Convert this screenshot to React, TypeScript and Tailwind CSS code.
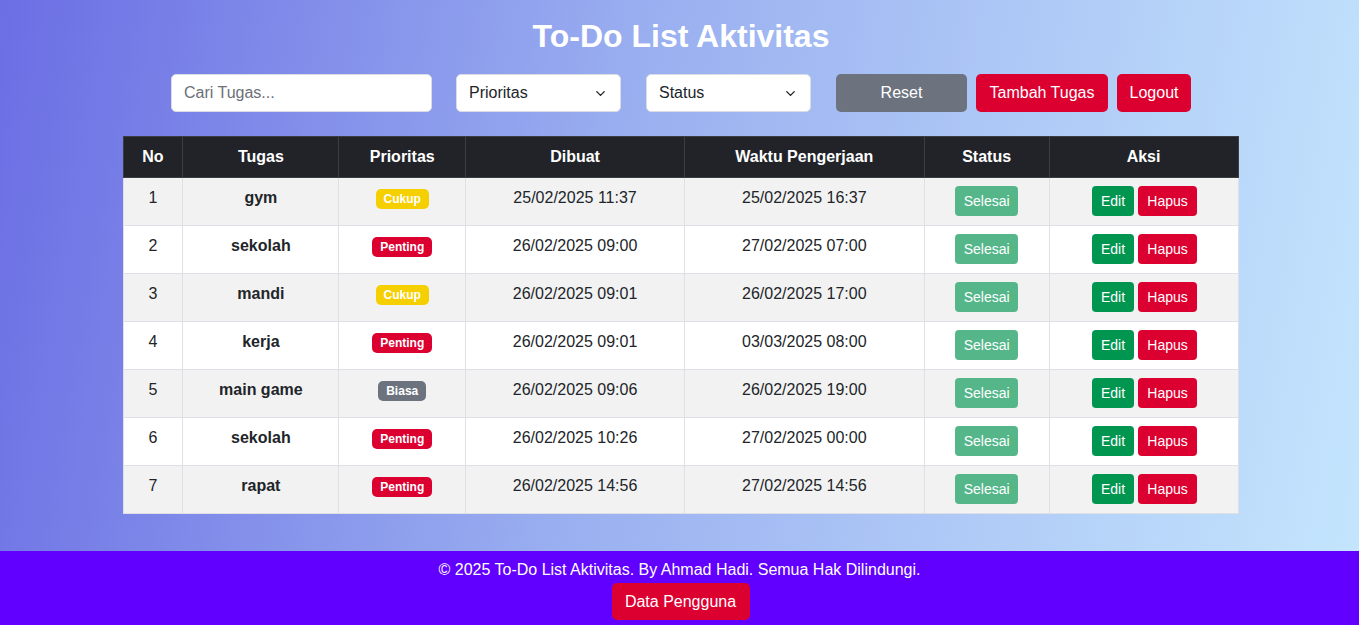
import React from "react";

type Row = { no: number; task: string; prio: "Cukup" | "Penting" | "Biasa"; created: string; due: string };

const rows: Row[] = [
  { no: 1, task: "gym", prio: "Cukup", created: "25/02/2025 11:37", due: "25/02/2025 16:37" },
  { no: 2, task: "sekolah", prio: "Penting", created: "26/02/2025 09:00", due: "27/02/2025 07:00" },
  { no: 3, task: "mandi", prio: "Cukup", created: "26/02/2025 09:01", due: "26/02/2025 17:00" },
  { no: 4, task: "kerja", prio: "Penting", created: "26/02/2025 09:01", due: "03/03/2025 08:00" },
  { no: 5, task: "main game", prio: "Biasa", created: "26/02/2025 09:06", due: "26/02/2025 19:00" },
  { no: 6, task: "sekolah", prio: "Penting", created: "26/02/2025 10:26", due: "27/02/2025 00:00" },
  { no: 7, task: "rapat", prio: "Penting", created: "26/02/2025 14:56", due: "27/02/2025 14:56" },
];

function Badge({ p }: { p: Row["prio"] }) {
  const cls =
    p === "Cukup"
      ? "bg-[#f5cf00]"
      : p === "Penting"
      ? "bg-[#dc0030]"
      : "bg-[#6c737f]";
  return (
    <span className={`inline-block align-top ${cls} text-white text-[12px] font-bold leading-[14px] px-[8px] py-[3px] rounded-[5px]`}>
      {p}
    </span>
  );
}

function Chevron() {
  return (
    <svg width="15" height="15" viewBox="0 0 24 24" fill="none" stroke="#222" strokeWidth="2.2" strokeLinecap="round" strokeLinejoin="round">
      <path d="M6 9l6 6 6-6" />
    </svg>
  );
}

function FakeSelect({ label }: { label: string }) {
  return (
    <div className="relative w-[165px] h-[38px]">
      <select className="appearance-none w-full h-full bg-white border border-[#d9dce3] rounded-[5px] pl-[12px] pr-[30px] text-[16px] text-[#212529] outline-none">
        <option>{label}</option>
      </select>
      <div className="absolute right-[13px] top-[12px] pointer-events-none">
        <Chevron />
      </div>
    </div>
  );
}

export default function App() {
  return (
    <div className="min-h-[625px] flex flex-col" style={{ fontFamily: '"Liberation Sans", Arial, sans-serif' }}>
      <main className="bg-[linear-gradient(100deg,#6b6ee4_0%,#9aaff0_45%,#c4e5fd_100%)] pt-[18px] pb-[37px] flex flex-col items-center">
        <h1 className="text-white text-[32px] font-bold leading-[37px] m-0 ml-[3px]">To-Do List Aktivitas</h1>
        <div className="flex items-center mt-[19px] ml-[3px]">
          <input
            placeholder="Cari Tugas..."
            className="w-[261px] h-[38px] bg-white border border-[#d9dce3] rounded-[5px] px-[12px] text-[16px] text-[#212529] placeholder:text-[#6b6f76] outline-none"
          />
          <div className="ml-[24px]">
            <FakeSelect label="Prioritas" />
          </div>
          <div className="ml-[25px]">
            <FakeSelect label="Status" />
          </div>
          <button className="ml-[25px] w-[131px] h-[38px] bg-[#6c737f] text-white text-[16px] rounded-[5px]">Reset</button>
          <button className="ml-[9px] w-[132px] h-[38px] bg-[#dc0030] text-white text-[16px] rounded-[5px]">Tambah Tugas</button>
          <button className="ml-[9px] w-[74px] h-[38px] bg-[#dc0030] text-white text-[16px] rounded-[5px]">Logout</button>
        </div>
        <table className="mt-[24px] ml-[2px] w-[1116px] border-collapse text-[16px] text-[#212529]">
          <colgroup>
            <col className="w-[60px]" />
            <col className="w-[156px]" />
            <col className="w-[127px]" />
            <col className="w-[219px]" />
            <col className="w-[240px]" />
            <col className="w-[125px]" />
            <col className="w-[189px]" />
          </colgroup>
          <thead>
            <tr className="bg-[#222329] text-white">
              {["No", "Tugas", "Prioritas", "Dibuat", "Waktu Pengerjaan", "Status", "Aksi"].map((h) => (
                <th key={h} className="h-[41px] border border-[#3a3d42] font-bold text-center align-middle p-0">
                  {h}
                </th>
              ))}
            </tr>
          </thead>
          <tbody>
            {rows.map((r, i) => (
              <tr key={r.no} className={i % 2 === 0 ? "bg-[#f2f2f2]" : "bg-white"}>
                <td className="h-[48px] border border-[#dfe0e6] text-center align-top pt-[8px]">{r.no}</td>
                <td className="border border-[#dfe0e6] text-center align-top pt-[8px] font-bold">{r.task}</td>
                <td className="border border-[#dfe0e6] text-center align-top pt-[11px]">
                  <Badge p={r.prio} />
                </td>
                <td className="border border-[#dfe0e6] text-center align-top pt-[8px]">{r.created}</td>
                <td className="border border-[#dfe0e6] text-center align-top pt-[8px]">{r.due}</td>
                <td className="border border-[#dfe0e6] text-center align-top pt-[8px]">
                  <button className="w-[63px] h-[30px] bg-[#55b68a] text-white text-[14px] rounded-[4px]">Selesai</button>
                </td>
                <td className="border border-[#dfe0e6] text-center align-top pt-[8px]">
                  <div className="flex justify-center gap-[4px] pl-[2px]">
                    <button className="w-[42px] h-[30px] bg-[#009650] text-white text-[14px] rounded-[4px]">Edit</button>
                    <button className="w-[59px] h-[30px] bg-[#dc0030] text-white text-[14px] rounded-[4px]">Hapus</button>
                  </div>
                </td>
              </tr>
            ))}
          </tbody>
        </table>
      </main>
      <footer className="bg-[#6200ff] h-[74px] flex flex-col items-center pt-[10px]">
        <p className="text-white text-[16px] leading-[18px] m-0">© 2025 To-Do List Aktivitas. By Ahmad Hadi. Semua Hak Dilindungi.</p>
        <button className="mt-[4px] ml-[2px] w-[138px] h-[37px] bg-[#dc0030] text-white text-[16px] rounded-[5px]">Data Pengguna</button>
      </footer>
    </div>
  );
}
